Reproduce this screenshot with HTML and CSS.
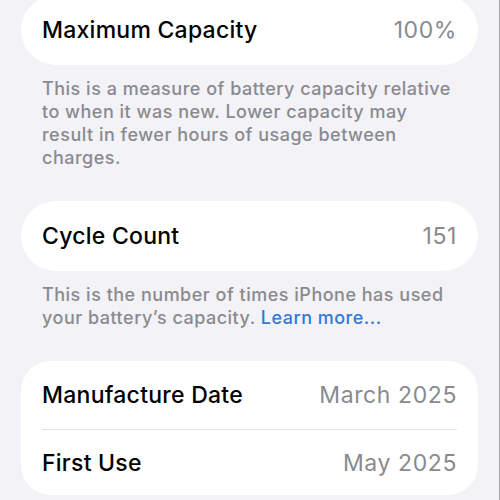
FILE: index.html
```html
<!DOCTYPE html>
<html lang="en">
<head>
  <meta charset="UTF-8">
  <meta name="viewport" content="width=device-width, initial-scale=1.0">
  <title>Battery Health</title>
  <link rel="stylesheet" href="styles.css">
</head>
<body>
  <div class="page">
    <div class="card first">
      <div class="row">
        <span class="label">Maximum Capacity</span>
        <span class="value">100%</span>
      </div>
    </div>
    <p class="note">This is a measure of battery capacity relative to when it was new. Lower capacity may result in fewer hours of usage between charges.</p>

    <div class="card">
      <div class="row">
        <span class="label">Cycle Count</span>
        <span class="value">151</span>
      </div>
    </div>
    <p class="note">This is the number of times iPhone has used your battery’s capacity. <a href="#" class="link">Learn more...</a></p>

    <div class="card list">
      <div class="row">
        <span class="label">Manufacture Date</span>
        <span class="value">March 2025</span>
      </div>
      <div class="row">
        <span class="label">First Use</span>
        <span class="value">May 2025</span>
      </div>
    </div>
  </div>
</body>
</html>
```

FILE: styles.css
```css
* {
  margin: 0;
  padding: 0;
  box-sizing: border-box;
}

body {
  background-color: #f2f2f7;
  font-family: 'Inter', 'Liberation Sans', sans-serif;
  height: 500px;
  overflow: hidden;
  border-right: 1px solid #a9a9ad;
}

.page {
  padding: 0 21px;
}

.card {
  background: white;
  border-radius: 35px;
  overflow: hidden;
}

.card.first {
  margin-top: -5px;
}

.row {
  display: flex;
  justify-content: space-between;
  align-items: center;
  height: 70px;
  padding: 0 21px;
  font-size: 23px;
}

.label {
  color: #000;
  font-weight: 500;
  letter-spacing: 0.25px;
}

.value {
  color: #8a8a8e;
  font-weight: 400;
  letter-spacing: 0.6px;
}

.list {
  border-radius: 30px;
}

.list .row {
  height: 66px;
}

.list .row + .row {
  border-top: 1px solid #e3e3e6;
  margin: 0 21px;
  padding: 0;
}

.list .row:first-child {
  height: 68px;
}

.note {
  padding: 12px 21px 32px;
  font-size: 18px;
  font-weight: 500;
  letter-spacing: 0.5px;
  line-height: 23px;
  color: #8a8a8e;
}

.link {
  color: #3478d6;
  text-decoration: none;
}
```
